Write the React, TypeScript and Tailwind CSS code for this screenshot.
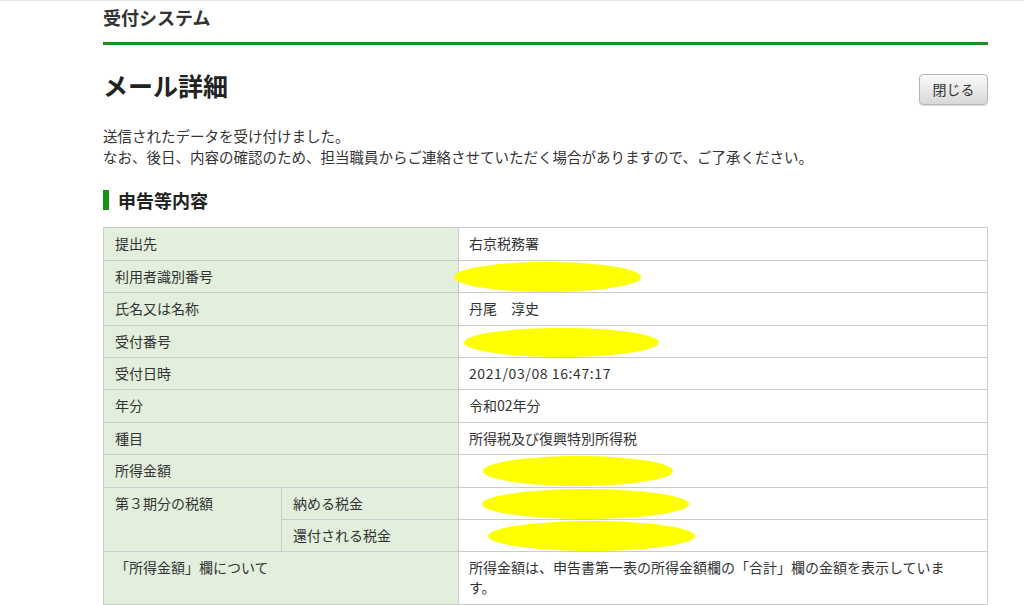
import React from "react";

const font = { fontFamily: '"Noto Sans CJK JP", "Noto Sans", sans-serif' };

function Blob({ left, top, w, h }: { left: number; top: number; w: number; h: number }) {
  return (
    <span
      className="absolute rounded-[50%] bg-[#ffff00]"
      style={{ left, top, width: w, height: h }}
    />
  );
}

const labelCls =
  "border border-[#cccccc] bg-[#e1efdc] px-[11px] py-[5px] align-top text-left font-normal";
const valueCls = "relative border border-[#cccccc] bg-white px-[10px] py-[5px] align-top";

export default function App() {
  return (
    <div className="min-h-[605px] bg-white text-[#333333]" style={font}>
      <div className="h-px bg-[#e5e5e5]" />
      <div className="mx-[103px] w-[885px]">
        <div className="h-[41px] pt-[4px] text-[18px] font-bold leading-[24px] text-[#333]">受付システム</div>
        <div className="h-[3px] bg-[#1a8f1a]" />
        <div className="mt-[25px] flex items-start justify-between">
          <h1 className="text-[25px] font-bold leading-[30px] text-[#222]">メール詳細</h1>
          <button className="mt-[4px] h-[31px] w-[69px] rounded-[4px] border border-[#b5b5b5] bg-gradient-to-b from-[#fafafa] to-[#d8d8d8] text-[14px] text-[#333] shadow-[0_1px_1px_rgba(0,0,0,0.15)]">
            閉じる
          </button>
        </div>
        <div className="mt-[20px] text-[14.5px] leading-[21px] text-[#333]">
          <p>送信されたデータを受け付けました。</p>
          <p>なお、後日、内容の確認のため、担当職員からご連絡させていただく場合がありますので、ご了承ください。</p>
        </div>
        <div className="mt-[22px] flex items-center gap-[9px]">
          <span className="h-[20px] w-[6px] bg-[#1a8f1a]" />
          <h2 className="text-[18px] font-bold leading-[22px] text-[#222]">申告等内容</h2>
        </div>
        <table className="mt-[16px] w-full border-collapse text-[14px] leading-[20px] text-[#333]">
          <colgroup>
            <col className="w-[178px]" />
            <col className="w-[177px]" />
            <col />
          </colgroup>
          <tbody>
            <tr className="h-[33px]">
              <th colSpan={2} className={labelCls}>提出先</th>
              <td className={valueCls}>右京税務署</td>
            </tr>
            <tr className="h-[32px]">
              <th colSpan={2} className={labelCls}>利用者識別番号</th>
              <td className={valueCls}>
                <Blob left={-5} top={1} w={187} h={30} />
              </td>
            </tr>
            <tr className="h-[33px]">
              <th colSpan={2} className={labelCls}>氏名又は名称</th>
              <td className={valueCls}>丹尾　淳史</td>
            </tr>
            <tr className="h-[32px]">
              <th colSpan={2} className={labelCls}>受付番号</th>
              <td className={valueCls}>
                <Blob left={5} top={2} w={195} h={29} />
              </td>
            </tr>
            <tr className="h-[32px]">
              <th colSpan={2} className={labelCls}>受付日時</th>
              <td className={valueCls + " tracking-[0.6px]"}>2021/03/08 16:47:17</td>
            </tr>
            <tr className="h-[33px]">
              <th colSpan={2} className={labelCls}>年分</th>
              <td className={valueCls}>令和02年分</td>
            </tr>
            <tr className="h-[32px]">
              <th colSpan={2} className={labelCls}>種目</th>
              <td className={valueCls}>所得税及び復興特別所得税</td>
            </tr>
            <tr className="h-[33px]">
              <th colSpan={2} className={labelCls}>所得金額</th>
              <td className={valueCls}>
                <Blob left={24} top={1} w={190} h={30} />
              </td>
            </tr>
            <tr className="h-[32px]">
              <th rowSpan={2} className={labelCls}>第３期分の税額</th>
              <th className={labelCls}>納める税金</th>
              <td className={valueCls}>
                <Blob left={23} top={1} w={207} h={30} />
              </td>
            </tr>
            <tr className="h-[32px]">
              <th className={labelCls}>還付される税金</th>
              <td className={valueCls}>
                <Blob left={29} top={1} w={207} h={30} />
              </td>
            </tr>
            <tr className="h-[53px]">
              <th colSpan={2} className={labelCls}>「所得金額」欄について</th>
              <td className={valueCls + " pr-[20px]"}>
                所得金額は、申告書第一表の所得金額欄の「合計」欄の金額を表示しています。
              </td>
            </tr>
          </tbody>
        </table>
      </div>
    </div>
  );
}
